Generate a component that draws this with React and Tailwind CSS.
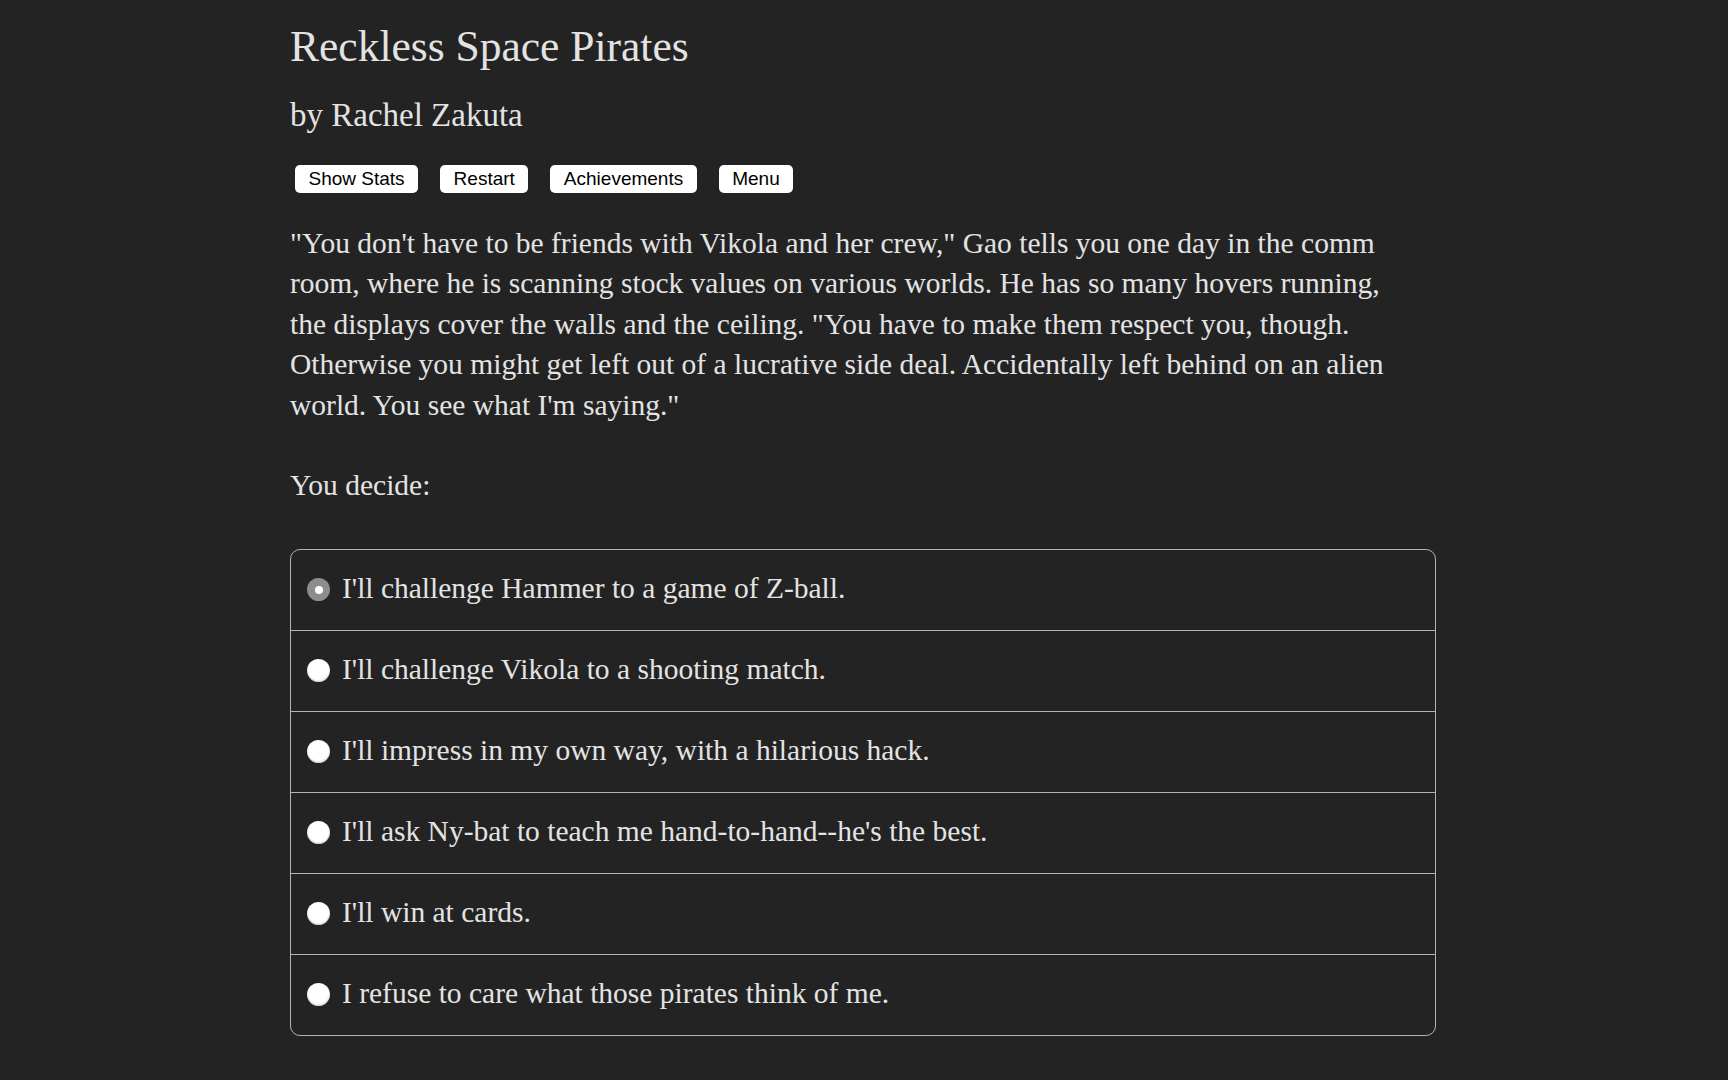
import React from "react";

const options = [
  "I'll challenge Hammer to a game of Z-ball.",
  "I'll challenge Vikola to a shooting match.",
  "I'll impress in my own way, with a hilarious hack.",
  "I'll ask Ny-bat to teach me hand-to-hand--he's the best.",
  "I'll win at cards.",
  "I refuse to care what those pirates think of me.",
];

const serif = { fontFamily: '"Liberation Serif", "DejaVu Serif", serif' };

function Radio({ checked }) {
  if (checked) {
    return (
      <span className="flex h-[23px] w-[23px] shrink-0 items-center justify-center rounded-full bg-[#8d8d8d]">
        <span className="h-[8px] w-[8px] rounded-full bg-white" />
      </span>
    );
  }
  return (
    <span className="h-[23px] w-[23px] shrink-0 rounded-full bg-white shadow-[inset_0_-1px_2px_rgba(0,0,0,0.25)]" />
  );
}

export default function App() {
  return (
    <div className="min-h-[1080px] w-full bg-[#232323] text-[#e3e3e3]" style={serif}>
      <div className="mx-auto w-[1148px] pt-[20px]">
        <h1 className="text-[43.5px] font-normal leading-[1.2]">Reckless Space Pirates</h1>
        <h2 className="mt-[24px] text-[33px] font-normal leading-[1.2]">by Rachel Zakuta</h2>
        <div
          className="mt-[29px] flex gap-[22px] pl-[5px]"
          style={{ fontFamily: '"Liberation Sans", Arial, sans-serif' }}
        >
          {["Show Stats", "Restart", "Achievements", "Menu"].map((b) => (
            <button
              key={b}
              className="h-[28px] rounded-[5px] bg-white px-[13.5px] text-[19px] leading-none text-black"
            >
              {b}
            </button>
          ))}
        </div>
        <p className="mt-[30px] max-w-[1120px] text-[29.5px] leading-[40.5px]">
          "You don't have to be friends with Vikola and her crew," Gao tells you one day in the comm
          room, where he is scanning stock values on various worlds. He has so many hovers running,
          the displays cover the walls and the ceiling. "You have to make them respect you, though.
          Otherwise you might get left out of a lucrative side deal. Accidentally left behind on an
          alien world. You see what I'm saying."
        </p>
        <p className="mt-[40px] text-[29.5px] leading-[40.5px]">You decide:</p>
        <div className="mt-[43px] w-[1146px] overflow-hidden rounded-[10px] border border-[#b3b3b3]">
          {options.map((o, i) => (
            <div
              key={o}
              className={`flex items-center gap-[12px] pl-[16px] ${i > 0 ? "h-[81px] border-t border-[#b3b3b3]" : "h-[80px]"}`}
            >
              <Radio checked={i === 0} />
              <span className="-mt-[4px] text-[29.5px] leading-[40.5px]">{o}</span>
            </div>
          ))}
        </div>
      </div>
    </div>
  );
}
